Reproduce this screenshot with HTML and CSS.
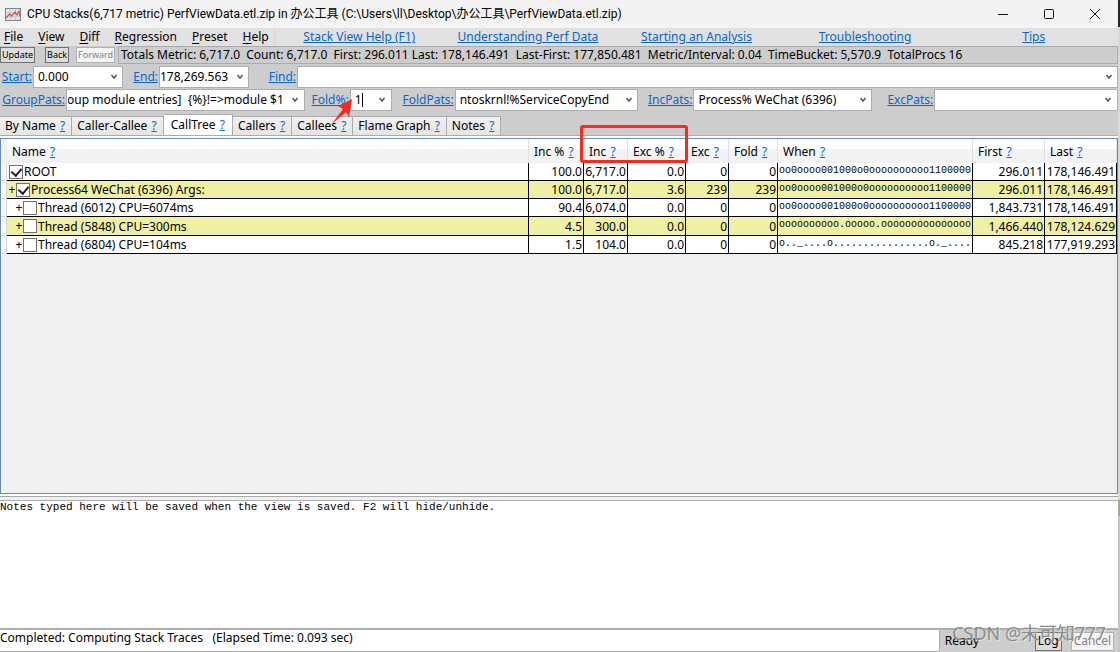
FILE: index.html
```html
<!DOCTYPE html>
<html lang="en">
<head>
<meta charset="utf-8">
<title>CPU Stacks</title>
<link rel="stylesheet" href="styles.css">
</head>
<body>
<div class="window">
  <header class="titlebar">
    <svg class="app-icon" viewBox="0 0 16 13" width="16" height="13" aria-hidden="true">
      <rect x="0.5" y="0.5" width="15" height="12" fill="#dfe3ea" stroke="#7c8796"/>
      <path d="M1 4.500h14M1 8.500h14M5.500 1v11M10.500 1v11" stroke="#c6ccd6" fill="none"/>
      <path d="M1 10l3.500-4 2 2 3.500-4 2 3 2-4 1 5" stroke="#d8524d" fill="none" stroke-width="1.200"/>
    </svg>
    <h1 class="title">CPU Stacks(6,717 metric) PerfViewData.etl.zip in 办公工具 (C:\Users\ll\Desktop\办公工具\PerfViewData.etl.zip)</h1>
    <button class="caption" aria-label="Minimize"><svg viewBox="0 0 12 12" width="12" height="12"><path d="M1 6.500h10" stroke="#111" fill="none"/></svg></button>
    <button class="caption" aria-label="Maximize"><svg viewBox="0 0 12 12" width="12" height="12"><rect x="1.500" y="1.500" width="9" height="9" rx="1" stroke="#111" fill="none"/></svg></button>
    <button class="caption" aria-label="Close"><svg viewBox="0 0 12 12" width="12" height="12"><path d="M1 1l10 10M11 1L1 11" stroke="#111" fill="none"/></svg></button>
  </header>

  <nav class="menubar">
    <div class="menus">
      <button class="menu"><u>F</u>ile</button>
      <button class="menu"><u>V</u>iew</button>
      <button class="menu"><u>D</u>iff</button>
      <button class="menu"><u>R</u>egression</button>
      <button class="menu"><u>P</u>reset</button>
      <button class="menu"><u>H</u>elp</button>
    </div>
    <div class="help-links">
      <a href="#">Stack View Help (F1)</a>
      <a href="#">Understanding Perf Data</a>
      <a href="#">Starting an Analysis</a>
      <a href="#">Troubleshooting</a>
      <a href="#">Tips</a>
    </div>
  </nav>

  <div class="toolbar">
    <div class="tools">
      <button class="tool">Update</button>
      <button class="tool">Back</button>
      <button class="tool" disabled>Forward</button>
    </div>
    <div class="totals">Totals Metric: 6,717.0&nbsp; Count: 6,717.0&nbsp; First: 296.011 Last: 178,146.491&nbsp; Last-First: 177,850.481&nbsp; Metric/Interval: 0.04&nbsp; TimeBucket: 5,570.9&nbsp; TotalProcs 16</div>
  </div>

  <form class="filters">
    <div class="filter-row range">
      <label for="start"><a href="#">Start:</a></label>
      <div class="combo"><input id="start" value="0.000"><button type="button" aria-label="Start list"><svg viewBox="0 0 8 6" width="8" height="6"><path d="M1.500 1l2.500 3 2.500-3"/></svg></button></div>
      <label for="end"><a href="#">End:</a></label>
      <div class="combo tight"><input id="end" class="at-end" value="178,269.563"><button type="button" aria-label="End list"><svg viewBox="0 0 8 6" width="8" height="6"><path d="M1.500 1l2.500 3 2.500-3"/></svg></button></div>
      <label for="find"><a href="#">Find:</a></label>
      <div class="combo"><input id="find"><button type="button" aria-label="Find list"><svg viewBox="0 0 8 6" width="8" height="6"><path d="M1.500 1l2.500 3 2.500-3"/></svg></button></div>
    </div>
    <div class="filter-row patterns">
      <label for="group"><a href="#">GroupPats:</a></label>
      <div class="combo tight"><input id="group" class="at-end" value="[group module entries]  {%}!=&gt;module $1"><button type="button" aria-label="GroupPats list"><svg viewBox="0 0 8 6" width="8" height="6"><path d="M1.500 1l2.500 3 2.500-3"/></svg></button></div>
      <label for="fold"><a href="#">Fold%:</a></label>
      <div class="combo"><input id="fold" value="1"><button type="button" aria-label="Fold list"><svg viewBox="0 0 8 6" width="8" height="6"><path d="M1.500 1l2.500 3 2.500-3"/></svg></button><span class="caret"></span></div>
      <label for="foldpats"><a href="#">FoldPats:</a></label>
      <div class="combo"><input id="foldpats" value="ntoskrnl!%ServiceCopyEnd"><button type="button" aria-label="FoldPats list"><svg viewBox="0 0 8 6" width="8" height="6"><path d="M1.500 1l2.500 3 2.500-3"/></svg></button></div>
      <label for="incpats"><a href="#">IncPats:</a></label>
      <div class="combo"><input id="incpats" value="Process% WeChat (6396)"><button type="button" aria-label="IncPats list"><svg viewBox="0 0 8 6" width="8" height="6"><path d="M1.500 1l2.500 3 2.500-3"/></svg></button></div>
      <label for="excpats"><a href="#">ExcPats:</a></label>
      <div class="combo"><input id="excpats"><button type="button" aria-label="ExcPats list"><svg viewBox="0 0 8 6" width="8" height="6"><path d="M1.500 1l2.500 3 2.500-3"/></svg></button></div>
    </div>
  </form>

  <div class="tabs">
    <div class="tab">By Name <a href="#">?</a></div>
    <div class="tab">Caller-Callee <a href="#">?</a></div>
    <div class="tab active">CallTree <a href="#">?</a></div>
    <div class="tab">Callers <a href="#">?</a></div>
    <div class="tab">Callees <a href="#">?</a></div>
    <div class="tab">Flame Graph <a href="#">?</a></div>
    <div class="tab">Notes <a href="#">?</a></div>
  </div>

  <main class="grid-pane">
    <table class="grid">
      <colgroup><col class="c-head"><col><col class="c-incp"><col class="c-inc"><col class="c-excp"><col class="c-exc"><col class="c-fold"><col class="c-when"><col class="c-time"><col class="c-time"></colgroup>
      <thead>
        <tr><td></td><th>Name <a href="#">?</a></th><th>Inc % <a href="#">?</a></th><th>Inc <a href="#">?</a></th><th>Exc % <a href="#">?</a></th><th>Exc <a href="#">?</a></th><th>Fold <a href="#">?</a></th><th>When <a href="#">?</a></th><th>First <a href="#">?</a></th><th>Last <a href="#">?</a></th></tr>
      </thead>
      <tbody>
        <tr><td></td><td class="name"><div class="node root"><label><input type="checkbox" checked>ROOT</label></div></td><td>100.0</td><td>6,717.0</td><td>0.0</td><td>0</td><td>0</td><td class="when">oo0oooo001000o0oooooooooo1100000</td><td>296.011</td><td>178,146.491</td></tr>
        <tr><td></td><td class="name"><div class="node"><button class="expand">+</button><label><input type="checkbox" checked>Process64 WeChat (6396) Args:</label></div></td><td>100.0</td><td>6,717.0</td><td>3.6</td><td>239</td><td>239</td><td class="when">oo0oooo001000o0oooooooooo1100000</td><td>296.011</td><td>178,146.491</td></tr>
        <tr><td></td><td class="name"><div class="node child"><button class="expand">+</button><label><input type="checkbox">Thread (6012) CPU=6074ms</label></div></td><td>90.4</td><td>6,074.0</td><td>0.0</td><td>0</td><td>0</td><td class="when">oo0oooo001000o0oooooooooo1100000</td><td>1,843.731</td><td>178,146.491</td></tr>
        <tr><td></td><td class="name"><div class="node child"><button class="expand">+</button><label><input type="checkbox">Thread (5848) CPU=300ms</label></div></td><td>4.5</td><td>300.0</td><td>0.0</td><td>0</td><td>0</td><td class="when">oooooooooo.ooooo.ooooooooooooooo</td><td>1,466.440</td><td>178,124.629</td></tr>
        <tr><td></td><td class="name"><div class="node child"><button class="expand">+</button><label><input type="checkbox">Thread (6804) CPU=104ms</label></div></td><td>1.5</td><td>104.0</td><td>0.0</td><td>0</td><td>0</td><td class="when">o.._....o................o._....</td><td>845.218</td><td>177,919.293</td></tr>
      </tbody>
    </table>
  </main>

  <div class="splitter"></div>
  <textarea class="notes" aria-label="Notes" spellcheck="false">Notes typed here will be saved when the view is saved. F2 will hide/unhide.</textarea>

  <footer class="statusbar">
    <div class="message">Completed: Computing Stack Traces&nbsp;&nbsp; (Elapsed Time: 0.093 sec)</div>
    <div class="state">Ready</div>
    <button class="foot">Log</button>
    <button class="foot" disabled>Cancel</button>
  </footer>

  <div class="mark-box"></div>
  <svg class="mark-arrow" viewBox="0 0 24 28" width="24" height="28" aria-hidden="true"><path d="M22 1L8 8l5 3L1 27l15-13 3 5z" fill="#fb2a1c"/></svg>
  <div class="watermark">CSDN @未可知777</div>
</div>
<div class="behind"></div>
<script src="app.js"></script>
</body>
</html>
```
FILE: styles.css
```css
* { box-sizing: border-box; }
body {
  margin: 0;
  height: 100vh;
  display: flex;
  background: #c9c9c9;
  color: #000;
  font: 12px/16px "Noto Sans", "Noto Sans CJK SC", sans-serif;
}
button, input, textarea { font: inherit; color: inherit; margin: 0; border-radius: 0; }
a { color: #0a66cc; text-decoration: underline; }

.window {
  position: relative;
  flex: 1;
  min-width: 0;
  display: flex;
  flex-direction: column;
  background: #cdcdcd;
}
.behind {
  width: 2px;
  background: linear-gradient(#23252d 0 27px, #d8d8d8 27px 500px, #a9a68a 500px 516px, #c4c4c4 516px);
}

.titlebar { display: flex; align-items: center; height: 28px; padding-left: 5px; background: #f3f3f3; }
.app-icon { margin-right: 6px; }
.title { flex: 1; margin: 0; font: 400 12px/16px Roboto, "Noto Sans CJK SC", sans-serif; white-space: nowrap; }
.caption { width: 46px; height: 26px; padding: 0; border: 0; background: none; display: grid; place-items: center; }

.menubar { display: flex; height: 18px; background: #e1e1e1; }
.menus { display: flex; width: 275px; padding-left: 4px; gap: 15px; border-right: 1px solid #d6d6d6; }
.menu { padding: 0; border: 0; background: none; line-height: 18px; }
.menu u { text-underline-offset: 2px; }
.help-links { flex: 1; display: grid; grid-template-columns: repeat(5, 1fr); text-align: center; line-height: 18px; }

.toolbar { display: flex; height: 18px; }
.tools { display: flex; align-items: center; gap: 7px; width: 118px; }
.tool { height: 16px; padding: 0 1px; border: 1px solid #707070; background: #dddddd; font-size: 9px; line-height: 14px; }
.tool:first-child { margin-right: 3px; }
.tool:disabled, .foot:disabled { color: #838383; border-color: #adb2b5; background: #f4f4f4; }
.totals { flex: 1; padding-left: 2px; border: 1px solid #a9a9af; line-height: 16px; white-space: nowrap; overflow: hidden; }

.filters { display: grid; gap: 1px; padding-top: 2px; }
.filter-row { display: grid; height: 22px; align-items: center; }
.range { grid-template-columns: 33px 90px 36px 90px 48px 1fr; }
.patterns { grid-template-columns: 66px 239fr 45px 42px 63px 184fr 55px 179fr 62px 184fr; }
.filter-row label { text-align: right; white-space: nowrap; padding-right: 1px; }
.combo { position: relative; display: flex; height: 22px; border: 1px solid #abadb3; background: #fff; }
.combo input { flex: 1; min-width: 0; width: 0; padding: 0 0 0 4px; border: 0; outline: 0; background: none; }
.combo.tight input { padding: 0 3px 0 1px; }
.combo button { width: 17px; padding: 0; border: 0; background: none; display: grid; place-items: center; }
.combo path { fill: none; stroke: #555; stroke-width: 1.5; }
.caret { position: absolute; left: 11px; top: 3px; width: 1px; height: 14px; background: #000; }

.tabs { display: flex; align-items: flex-end; height: 25px; border-bottom: 1px solid #acacac; }
.tab { height: 19px; padding: 0 6px 0 5px; border: 1px solid #acacac; border-left-width: 0; border-bottom: 0; background: linear-gradient(#f0f0f0, #e5e5e5); line-height: 18px; white-space: nowrap; }
.tab a, .grid th a { margin-left: 1px; }
.tab.active { height: 21px; padding: 0 7px; background: #fff; line-height: 20px; }

.grid-pane { flex: 1; margin-top: 2px; border: 1px solid #688caf; background: #f0f0f0; box-shadow: 0 -2px #fff; }
.grid { width: 100%; table-layout: fixed; border-collapse: separate; border-spacing: 0; }
.c-head { width: 6px; }
.c-incp { width: 55px; }
.c-inc { width: 44px; }
.c-excp { width: 58px; }
.c-exc { width: 43px; }
.c-fold { width: 49px; }
.c-when { width: 195px; }
.c-time { width: 72px; }
.grid th { height: 24px; padding: 1px 0 0 5px; border-right: 1px solid #dfe1e4; background: linear-gradient(#fff 40%, #f3f4f6 41%, #f1f2f4); font-weight: 400; text-align: left; white-space: nowrap; }
.grid td { padding: 0; white-space: nowrap; }
.grid tbody td { height: 18px; padding-right: 1px; border-right: 1px solid #000; border-bottom: 1px solid #000; background: #fff; text-align: right; line-height: 17px; overflow: hidden; }
.grid tbody tr:nth-child(4) td { height: 19px; }
.grid tbody tr:nth-child(even) td { background: #f0f0a4; }
.grid tbody td:first-child, .grid tbody tr:nth-child(even) td:first-child { border-right-color: #d5d5d5; border-bottom-color: #dadada; background: #f7f7f7; }
.grid tbody .name { text-align: left; }
.grid tbody .when { padding: 0 0 0 1px; text-align: left; vertical-align: top; font: 10px/15px "Liberation Mono", monospace; }
.node { display: flex; align-items: center; height: 17px; padding-left: 1px; }
.node.root { padding-left: 2px; }
.node.child { padding-left: 8px; }
.node label { display: flex; align-items: center; }
.node input { appearance: none; width: 14px; height: 14px; margin: 0 1px 0 0; border: 1px solid #707070; background: #fff; display: grid; place-items: center; }
.node input:checked::after { content: ""; width: 5px; height: 8px; margin-bottom: 2px; border: solid #212121; border-width: 0 2px 2px 0; transform: rotate(40deg); }
.expand { width: 8px; padding: 0; border: 0; background: none; line-height: 14px; }

.splitter { height: 7px; border-top: 2px solid #fff; border-bottom: 1px solid #abadb3; background: linear-gradient(#a9a9a9 1px, #f0f0f0 1px); }
.notes { height: 127px; padding: 0; border: 0; outline: 0; resize: none; background: #fff; font: 11px/13px "Liberation Mono", monospace; }

.statusbar { display: flex; align-items: center; height: 24px; border-top: 2px solid #abadb3; padding-right: 4px; }
.message { flex: 1; height: 22px; border: 1px solid #abadb3; border-width: 0 1px 1px 0; background: #fff; line-height: 16px; }
.state { width: 95px; padding-left: 5px; }
.foot { height: 19px; padding: 0 2px; border: 1px solid #707070; background: #ddd; line-height: 16px; }
.foot + .foot { margin-left: 9px; }

.mark-box { position: absolute; left: 580px; top: 125px; width: 108px; height: 38px; border: 3px solid #fb2a1c; border-radius: 3px; }
.mark-arrow { position: absolute; left: 330px; top: 98px; }
.watermark { position: absolute; right: 12px; bottom: 9px; color: #8c8c8c; font-size: 18px; line-height: 20px; text-shadow: 1px 1px #fff8; white-space: nowrap; }
```
FILE: app.js
```js
// Keep the tail of long patterns visible in their narrow boxes.
document.querySelectorAll(".at-end").forEach(function (box) {
  box.scrollLeft = box.scrollWidth;
});
```
